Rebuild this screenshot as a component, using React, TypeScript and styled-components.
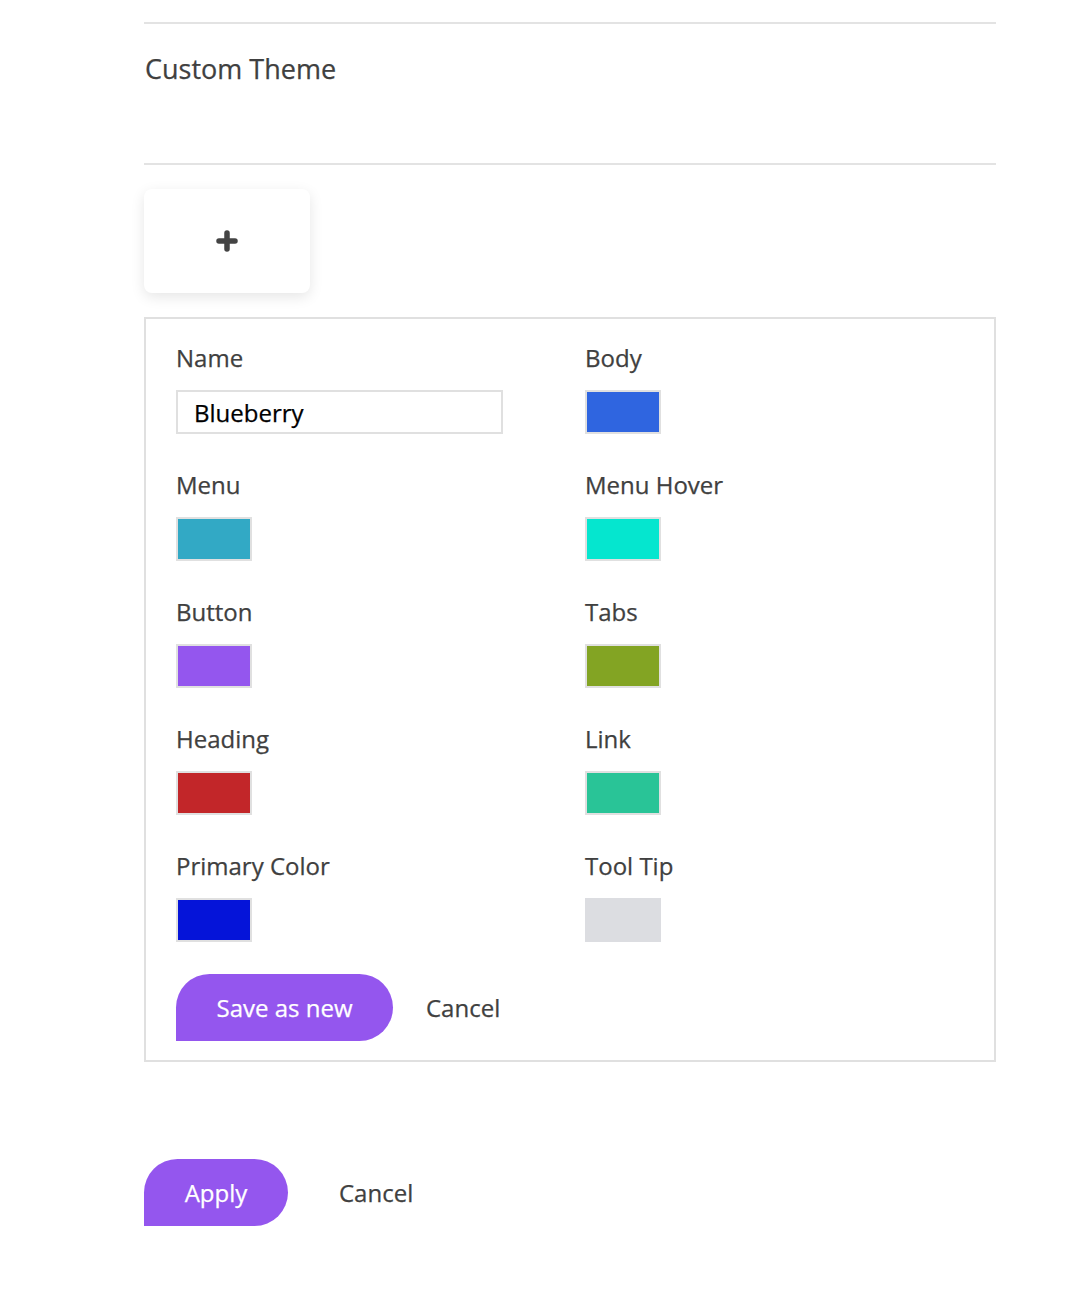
import React from "react";
import styled, { createGlobalStyle } from "styled-components";

const Global = createGlobalStyle`
  html, body { margin: 0; padding: 0; background: #fff; }
  body { font-family: "Open Sans", "Noto Sans", sans-serif; color: #404040; }
`;

const Page = styled.div`
  width: 852px;
  margin-left: 144px;
  padding-top: 22px;
`;

const Divider = styled.hr`
  border: 0;
  height: 2px;
  background: #e3e3e3;
  margin: 0;
`;

const Header = styled.div`
  padding: 27px 0 76px 1px;
`;

const Title = styled.h2`
  margin: 0;
  font-size: 27px;
  line-height: 36px;
  font-weight: 400;
  color: #404040;
  -webkit-text-stroke: 0.25px #404040;
`;

const AddCard = styled.button`
  display: flex;
  align-items: center;
  justify-content: center;
  width: 166px;
  height: 104px;
  margin-top: 24px;
  border: 0;
  border-radius: 8px;
  background: #fff;
  box-shadow: 0 4px 14px rgba(0, 0, 0, 0.1);
  cursor: pointer;
  padding: 0;
`;

const FormBox = styled.div`
  margin-top: 24px;
  border: 2px solid #e0e0e0;
  padding: 23px 0 19px 30px;
`;

const Grid = styled.div`
  display: grid;
  grid-template-columns: 409px 1fr;
  row-gap: 35px;
`;

const Field = styled.div`
  display: flex;
  flex-direction: column;
  gap: 16px;
`;

const Label = styled.label`
  font-size: 24px;
  line-height: 32px;
  color: #404040;
  -webkit-text-stroke: 0.25px #404040;
`;

const TextInput = styled.input`
  box-sizing: border-box;
  width: 327px;
  height: 44px;
  border: 2px solid #e0e0e0;
  padding: 0 16px;
  font-family: inherit;
  font-size: 24px;
  color: #000;
  outline: none;
  -webkit-text-stroke: 0.25px #000;
`;

const Swatch = styled.div<{ $color: string; $plain?: boolean }>`
  box-sizing: border-box;
  width: 76px;
  height: 44px;
  background: ${(p) => p.$color};
  border: 2px solid ${(p) => (p.$plain ? p.$color : "#e0e0e0")};
`;

const Actions = styled.div`
  display: flex;
  align-items: center;
  gap: 33px;
`;

const FormActions = styled(Actions)`
  margin-top: 32px;
`;

const PrimaryButton = styled.button<{ $w: number }>`
  width: ${(p) => p.$w}px;
  height: 67px;
  border: 0;
  border-radius: 34px 34px 34px 0;
  background: #9456ee;
  color: #fff;
  font-family: inherit;
  font-size: 24px;
  -webkit-text-stroke: 0.25px #fff;
  cursor: pointer;
  padding: 0;
`;

const TextButton = styled.button`
  border: 0;
  background: none;
  color: #404040;
  font-family: inherit;
  font-size: 24px;
  -webkit-text-stroke: 0.25px #404040;
  padding: 0;
  cursor: pointer;
`;

const FooterActions = styled(Actions)`
  margin-top: 97px;
  gap: 51px;
`;

const fields: { label: string; color: string; plain?: boolean }[] = [
  { label: "Body", color: "#2f65e0" },
  { label: "Menu", color: "#32a9c5" },
  { label: "Menu Hover", color: "#05e6cf" },
  { label: "Button", color: "#9456ee" },
  { label: "Tabs", color: "#83a423" },
  { label: "Heading", color: "#c22629" },
  { label: "Link", color: "#29c497" },
  { label: "Primary Color", color: "#0514d9" },
  { label: "Tool Tip", color: "#dcdde1", plain: true },
];

export default function App() {
  return (
    <>
      <Global />
      <Page>
        <Divider />
        <Header>
          <Title>Custom Theme</Title>
        </Header>
        <Divider />
        <AddCard aria-label="Add theme">
          <svg width="22" height="22" viewBox="0 0 22 22">
            <path
              d="M11 3v16M3 11h16"
              stroke="#444"
              strokeWidth="5.5"
              strokeLinecap="round"
              fill="none"
            />
          </svg>
        </AddCard>
        <FormBox>
          <Grid>
            <Field>
              <Label>Name</Label>
              <TextInput defaultValue="Blueberry" />
            </Field>
            {fields.map((f) => (
              <Field key={f.label}>
                <Label>{f.label}</Label>
                <Swatch $color={f.color} $plain={f.plain} />
              </Field>
            ))}
          </Grid>
          <FormActions>
            <PrimaryButton $w={217}>Save as new</PrimaryButton>
            <TextButton>Cancel</TextButton>
          </FormActions>
        </FormBox>
        <FooterActions>
          <PrimaryButton $w={144}>Apply</PrimaryButton>
          <TextButton>Cancel</TextButton>
        </FooterActions>
      </Page>
    </>
  );
}
